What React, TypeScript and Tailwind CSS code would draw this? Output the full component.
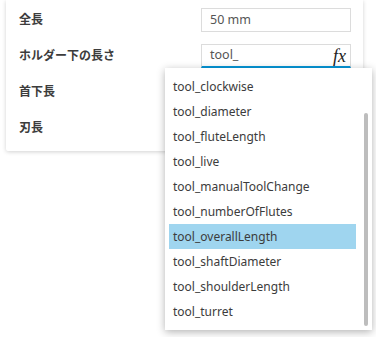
const items = [
  "tool_clockwise",
  "tool_diameter",
  "tool_fluteLength",
  "tool_live",
  "tool_manualToolChange",
  "tool_numberOfFlutes",
  "tool_overallLength",
  "tool_shaftDiameter",
  "tool_shoulderLength",
  "tool_turret",
];

const font = { fontFamily: '"Noto Sans", "Noto Sans CJK JP", sans-serif' };

function Row({ label, children }: { label: string; children?: React.ReactNode }) {
  return (
    <div className="flex h-9 items-center justify-between pl-[13px] pr-[12px]">
      <span className="text-[12px] font-bold text-[#3c3c3c]">{label}</span>
      {children}
    </div>
  );
}

export default function App() {
  return (
    <div className="relative h-[337px] w-[376px] overflow-hidden bg-white" style={font}>
      <div className="ml-[6px] w-[357px] rounded-b-[2px] bg-white pt-[2px] pb-[5px] shadow-[0_1px_4px_rgba(0,0,0,0.18)]">
        <Row label="全長">
          <div className="flex h-6 w-[150px] items-center border border-[#dcdcdc] px-2 text-[12.5px] text-[#555]">
            50 mm
          </div>
        </Row>
        <Row label="ホルダー下の長さ">
          <div className="flex h-6 w-[150px] items-center justify-between border border-[#dcdcdc] border-b-2 border-b-[#0696d7] pl-2 pr-1 text-[12.5px] text-[#555]">
            <span>tool_</span>
            <span className="text-[18px] italic leading-none text-[#222]" style={{ fontFamily: '"Liberation Serif", serif' }}>
              fx
            </span>
          </div>
        </Row>
        <Row label="首下長" />
        <Row label="刃長" />
      </div>

      <div className="absolute left-[165px] top-[68px] h-[262px] w-[207px] bg-white pl-1 pt-[6px] shadow-[0_2px_8px_rgba(0,0,0,0.3)]">
        <div className="w-[187px]">
          {items.map((it) => (
            <div
              key={it}
              className={
                "flex h-[25px] items-center pl-1 text-[12px] text-[#3c3c3c] " +
                (it === "tool_overallLength" ? "bg-[#9fd5ef]" : "")
              }
            >
              {it}
            </div>
          ))}
        </div>
        <div className="absolute right-[4px] top-[45px] h-[213px] w-[4px] rounded-full bg-[#bdbdbd]" />
      </div>
    </div>
  );
}
